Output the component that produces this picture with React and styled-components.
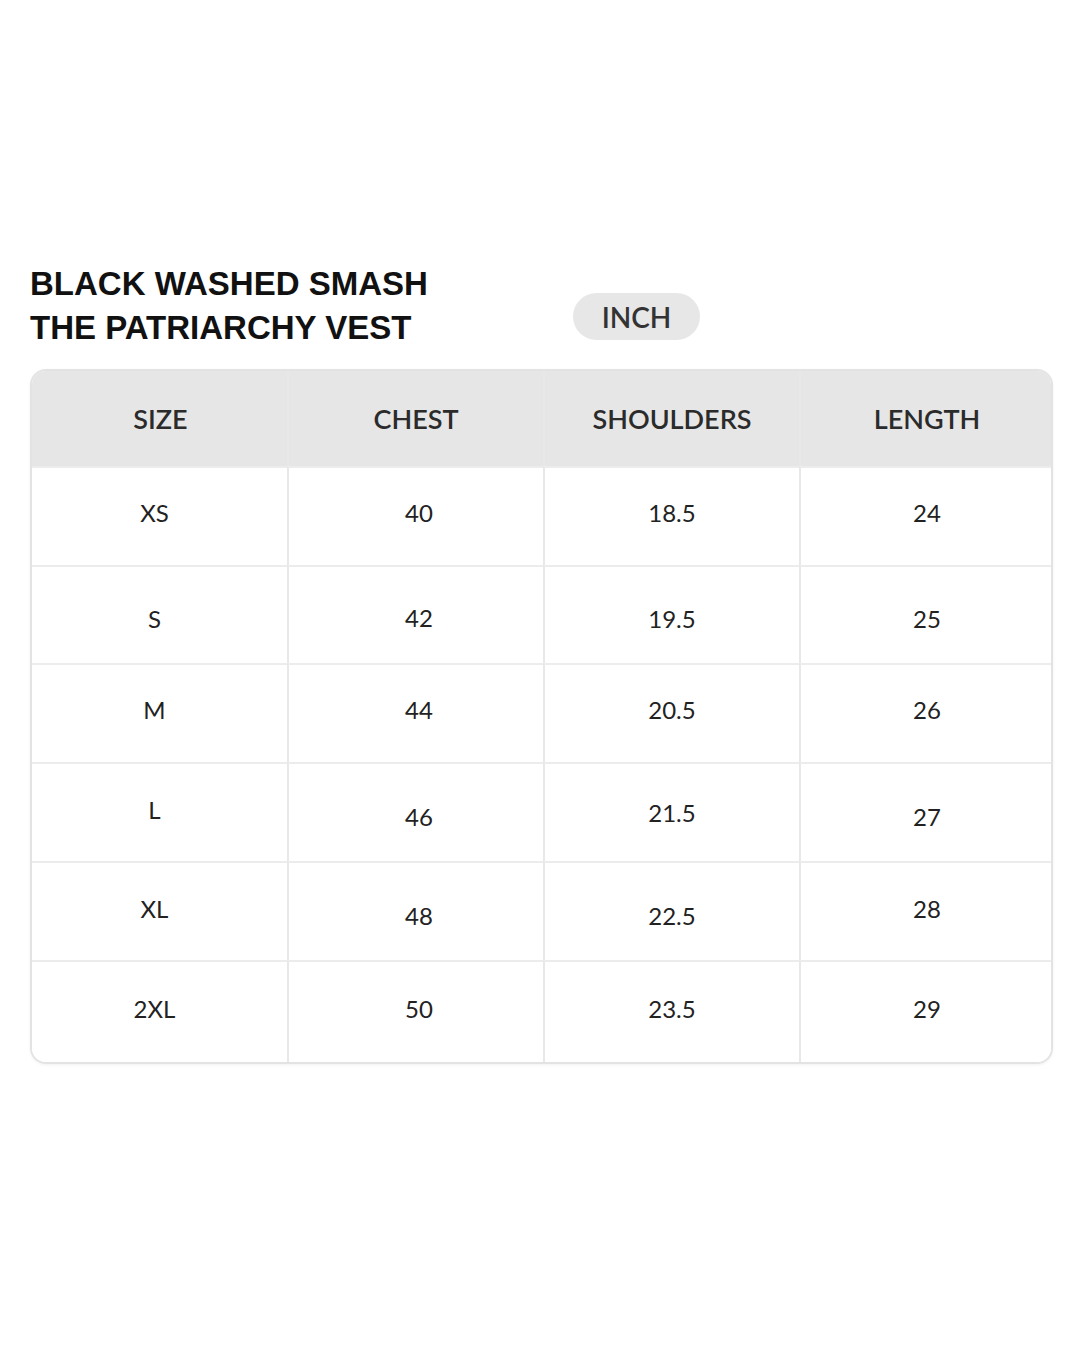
import React from 'react';
import styled, { createGlobalStyle } from 'styled-components';

const GlobalStyle = createGlobalStyle`
  html, body {
    margin: 0;
    padding: 0;
    background: #ffffff;
  }
  body {
    font-family: Lato, "Noto Sans", sans-serif;
    color: #222;
  }
`;

const Page = styled.div`
  width: 1080px;
  height: 1350px;
  padding: 262px 27px 0 30px;
  box-sizing: border-box;
`;

const Head = styled.div`
  display: flex;
  align-items: flex-end;
  height: 98px;
`;

const Title = styled.h1`
  margin: 0;
  width: 543px;
  font-family: "Liberation Sans", Arial, sans-serif;
  font-weight: 700;
  font-size: 33px;
  line-height: 44px;
  color: #111;
  padding-bottom: 10px;
`;

const Pill = styled.div`
  width: 127px;
  height: 47px;
  border-radius: 24px;
  background: #e7e7e7;
  display: flex;
  align-items: center;
  justify-content: center;
  font-family: Lato, sans-serif;
  font-weight: 600;
  font-size: 28px;
  color: #333;
  margin-bottom: 20px;
`;

const Table = styled.div`
  margin-top: 9px;
  display: grid;
  grid-template-columns: 255px 256px 256px 254px;
  grid-template-rows: 95px 99px 98px 99px 99px 99px 102px;
  border: 2px solid #e3e3e3;
  border-radius: 16px;
  overflow: hidden;
  box-shadow: 0 1px 3px rgba(0, 0, 0, 0.06);
`;

const Cell = styled.div`
  display: flex;
  align-items: center;
  justify-content: center;
  box-sizing: border-box;
  border-left: ${({ $first }) => ($first ? 'none' : '2px solid #e8e8e8')};
  border-top: ${({ $top }) => ($top ? 'none' : '2px solid #ececec')};
  background: ${({ $header }) => ($header ? '#e6e6e6' : '#ffffff')};
  font-size: ${({ $header }) => ($header ? '27px' : '24px')};
  font-weight: ${({ $header }) => ($header ? 600 : 400)};
  color: ${({ $header }) => ($header ? '#2b2b2b' : '#222')};
  padding-top: ${({ $dy }) => ($dy > 0 ? $dy * 2 : 0)}px;
  padding-bottom: ${({ $dy }) => ($dy < 0 ? -$dy * 2 : 0)}px;
  padding-left: ${({ $dx }) => ($dx > 0 ? $dx * 2 : 0)}px;
  padding-right: ${({ $dx }) => ($dx < 0 ? -$dx * 2 : 0)}px;
`;

const headers = ['SIZE', 'CHEST', 'SHOULDERS', 'LENGTH'];
const headerDx = [1, 0, 0, 0];

const colDx = [-5, 3, 0, 0];

const rows = [
  { v: ['XS', '40', '18.5', '24'], dy: [-4, -4, -4, -4] },
  { v: ['S', '42', '19.5', '25'], dy: [3, 2, 3, 3] },
  { v: ['M', '44', '20.5', '26'], dy: [-4, -4, -4, -4] },
  { v: ['L', '46', '21.5', '27'], dy: [-3, 4, 0, 4] },
  { v: ['XL', '48', '22.5', '28'], dy: [-3, 4, 4, -3] },
  { v: ['2XL', '50', '23.5', '29'], dy: [-4, -4, -4, -4] },
];

const App = () => {
  return (
    <Page>
      <GlobalStyle />
      <Head>
        <Title>
          BLACK WASHED SMASH
          <br />
          THE PATRIARCHY VEST
        </Title>
        <Pill>INCH</Pill>
      </Head>
      <Table>
        {headers.map((h, i) => (
          <Cell key={h} $header $top $first={i === 0} $dx={headerDx[i]} $dy={0}>
            {h}
          </Cell>
        ))}
        {rows.map((r) =>
          r.v.map((val, i) => (
            <Cell key={r.v[0] + i} $first={i === 0} $dx={colDx[i]} $dy={r.dy[i]}>
              {val}
            </Cell>
          ))
        )}
      </Table>
    </Page>
  );
};

export default App;
